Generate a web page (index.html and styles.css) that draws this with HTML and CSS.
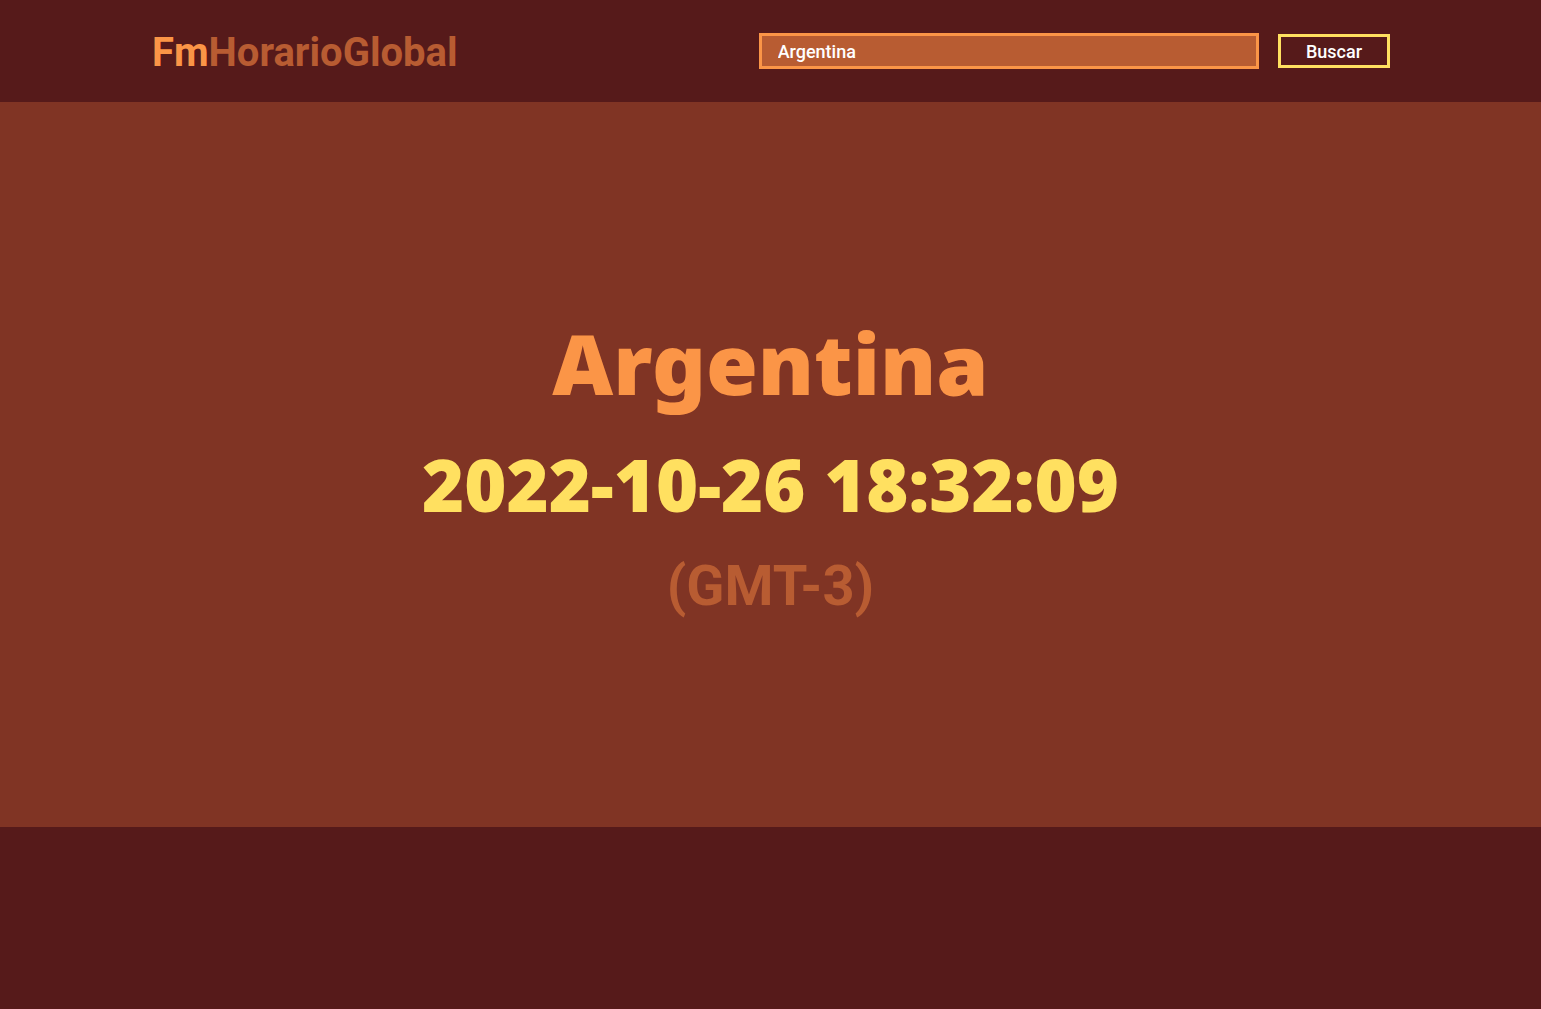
FILE: index.html
```html
<!DOCTYPE html>
<html lang="es">
<head>
<meta charset="utf-8">
<meta name="viewport" content="width=device-width, initial-scale=1">
<title>FmHorarioGlobal</title>
<link rel="stylesheet" href="styles.css">
</head>
<body>
<header class="header">
  <a class="logo" href="#"><span class="logo-accent">Fm</span>HorarioGlobal</a>
  <form class="search">
    <input class="search-input" type="text" aria-label="País" value="Argentina">
    <button class="search-button" type="button">Buscar</button>
  </form>
</header>
<main class="result">
  <h1 class="country">Argentina</h1>
  <p class="time">2022-10-26 18:32:09</p>
  <p class="zone">(GMT-3)</p>
</main>
</body>
</html>
```
FILE: styles.css
```css
* {
  box-sizing: border-box;
  margin: 0;
}

body {
  min-height: 100vh;
  background: #561a1a;
  font-family: Roboto, "Liberation Sans", sans-serif;
}

.header {
  display: flex;
  align-items: center;
  justify-content: space-between;
  padding: 20px 151px 20px 152px;
}

.logo {
  padding-top: 4px;
  color: #b85c32;
  font-size: 40px;
  font-weight: 700;
  line-height: 58px;
  text-decoration: none;
}

.logo-accent {
  color: #fb9547;
}

.search {
  display: flex;
  align-items: center;
  gap: 19px;
  width: 51%;
}

.search-input {
  flex: 1;
  min-width: 0;
  height: 36px;
  padding: 0 16px;
  border: 3px solid #fb9547;
  background: #b85c32;
  color: #fff;
  font: 500 18px Roboto, sans-serif;
}

.search-button {
  width: 112px;
  height: 34px;
  border: 3px solid #ffe060;
  background: transparent;
  color: #fff;
  font: 500 18px Roboto, sans-serif;
}

.result {
  display: flex;
  flex-direction: column;
  align-items: center;
  justify-content: center;
  min-height: 725px;
  background: #803424;
  text-align: center;
}

.country {
  color: #fb9547;
  font: 900 84px/126px "Noto Sans", sans-serif;
}

.time {
  color: #ffe060;
  font: 900 72px/116px "Noto Sans", sans-serif;
}

.zone {
  color: #b85c32;
  font-size: 56px;
  font-weight: 700;
  line-height: 88px;
}
```
